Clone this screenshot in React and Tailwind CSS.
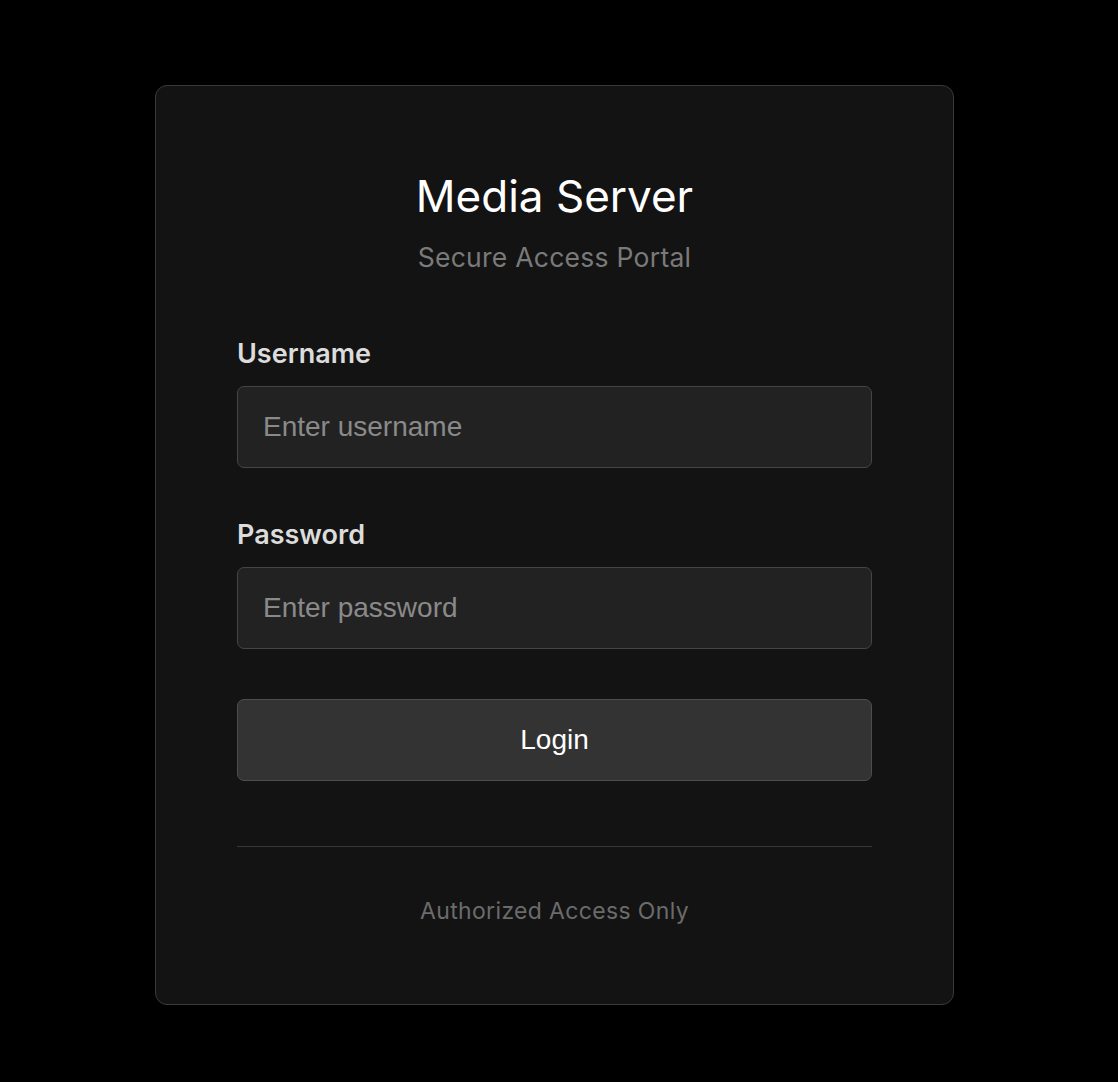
import React, { useState } from "react";

function Field({ label, type, placeholder, value, onChange }) {
  return (
    <label className="flex flex-col">
      <span className="mb-[16px] text-[27px] font-semibold leading-[32px] text-[#dcdcdc] [font-family:Inter,sans-serif]">
        {label}
      </span>
      <input
        type={type}
        value={value}
        onChange={onChange}
        placeholder={placeholder}
        className="h-[82px] w-full rounded-[7px] border border-[#454545] bg-[#222222] px-[25px] text-[28px] text-white outline-none placeholder:text-[#8a8a8a] [font-family:'Liberation_Sans',Arial,sans-serif]"
      />
    </label>
  );
}

export default function App() {
  const [form, setForm] = useState({ username: "", password: "" });

  return (
    <div className="min-h-screen bg-black pl-[155px] pt-[85px] pb-[78px]">
      <div className="w-[799px] rounded-[12px] border border-[#393939] bg-[#131313] px-[81px] pt-[84px] pb-[79px]">
        <div className="text-center [font-family:Inter,sans-serif]">
          <h1 className="text-[44px] font-normal leading-[52px] text-white">Media Server</h1>
          <p className="mt-[19px] text-[26.5px] leading-[32px] tracking-[0.01em] text-[#7a7a7a]">Secure Access Portal</p>
        </div>

        <form className="mt-[65px] flex flex-col gap-[51px]" onSubmit={(event) => event.preventDefault()}>
          <Field
            label="Username"
            type="text"
            placeholder="Enter username"
            value={form.username}
            onChange={(event) => setForm({ ...form, username: event.target.value })}
          />
          <Field
            label="Password"
            type="password"
            placeholder="Enter password"
            value={form.password}
            onChange={(event) => setForm({ ...form, password: event.target.value })}
          />
          <button
            type="submit"
            className="-mt-[1px] h-[82px] w-full rounded-[7px] border border-[#4d4d4d] bg-[#333333] text-[28px] text-white [font-family:'Liberation_Sans',Arial,sans-serif]"
          >
            Login
          </button>
        </form>

        <div className="mt-[65px] border-t border-[#383838] pt-[50px] text-center text-[23px] leading-[28px] tracking-[0.015em] text-[#6b6b6b] [font-family:Inter,sans-serif]">
          Authorized Access Only
        </div>
      </div>
    </div>
  );
}
